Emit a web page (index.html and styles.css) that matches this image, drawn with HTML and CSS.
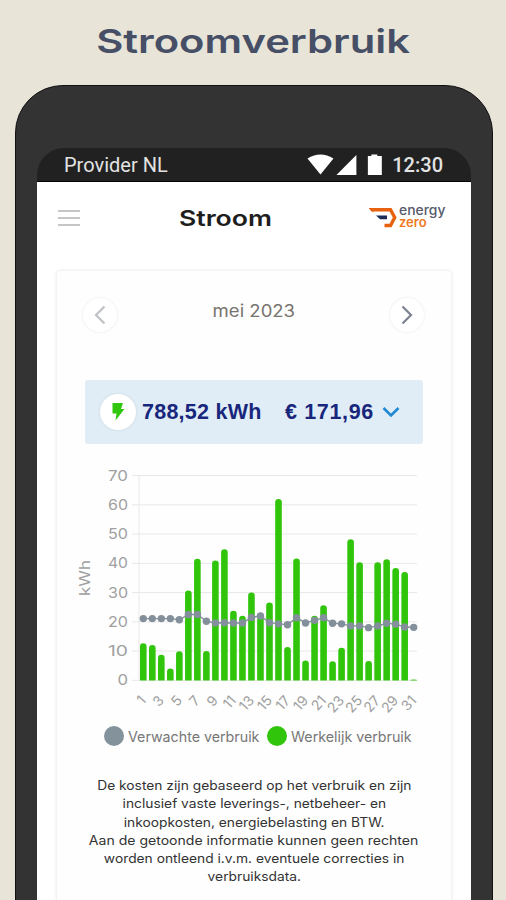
FILE: index.html
```html
<!DOCTYPE html>
<html lang="nl">
<head>
<meta charset="utf-8">
<title>Stroomverbruik</title>
<link rel="stylesheet" href="styles.css">
</head>
<body>
<h1 class="headline"><span class="wide">Stroomverbruik</span></h1>
<div class="phone">
  <div class="screen">
    <div class="status">
      <span class="provider">Provider NL</span>
      <svg class="status-icons" width="76" height="24" viewBox="0 0 76 24"><path d="M0.500 5.500Q13.500-2.500 26.500 5.500L13.500 21.500Z"/><path d="M29.500 22L49.500 2V22Z"/><path d="M61 3h3.500V1.500h6v1.500H75V22H61Z"/></svg>
      <span class="clock">12:30</span>
    </div>
    <header class="bar">
      <div class="menu"><i></i><i></i><i></i></div>
      <h2 class="title"><span class="wide">Stroom</span></h2>
      <div class="logo">
        <svg width="30" height="22" viewBox="0 0 30 22"><path d="M3 2.700H21.500L25.700 10.500L21.500 18.500H15.500" fill="none" stroke="#e8610f" stroke-width="3.400"/><path d="M-.5 1H5V4.400H2.500Z" fill="#e8610f"/><path d="M7 8.400H18V12.200H11Z" fill="#1d2b57"/></svg>
        <div class="brand"><span class="energy">energy</span><span class="zero">zero</span></div>
      </div>
    </header>
    <main class="card">
      <nav class="month">
        <span class="arrow off"><svg width="12" height="20" viewBox="0 0 12 20"><path d="M10.500 1.500L2 10L10.500 18.500"/></svg></span>
        <span class="month-name"><span class="wide">mei 2023</span></span>
        <span class="arrow"><svg width="12" height="20" viewBox="0 0 12 20"><path d="M1.500 1.500L10 10L1.500 18.500"/></svg></span>
      </nav>
      <section class="total">
        <span class="bolt"><svg width="14" height="20" viewBox="0 0 14 20"><path d="M1.500 1H12L10 7H13.500L4.500 18.500L5.500 11.500H1.500Z"/></svg></span>
        <span class="kwh">788,52 kWh</span>
        <span class="euro">€ 171,96</span>
        <svg class="chev" width="18" height="12" viewBox="0 0 18 12"><path d="M1.500 2L9 9.500L16.500 2"/></svg>
      </section>
      <svg class="chart" id="chart" width="360" height="252" viewBox="70 465 360 252"></svg>
      <div class="legend">
        <i class="dot gray"></i><span class="legend-a"><span class="wide">Verwachte verbruik</span></span>
        <i class="dot green"></i><span class="legend-b"><span class="wide">Werkelijk verbruik</span></span>
      </div>
      <p class="note"><span class="l1">De kosten zijn gebaseerd op het verbruik en zijn</span><span class="l2">inclusief vaste leverings-, netbeheer- en</span><span class="l3">inkoopkosten, energiebelasting en BTW.</span><span class="l4">Aan de getoonde informatie kunnen geen rechten</span><span class="l5">worden ontleend i.v.m. eventuele correcties in</span><span class="l6">verbruiksdata.</span></p>
    </main>
  </div>
</div>
<script src="chart.js"></script>
</body>
</html>
```
FILE: styles.css
```css
* { box-sizing: border-box; }
body { margin: 0; width: 506px; height: 900px; overflow: hidden; background: #e8e5d8; font-family: Inter, "Liberation Sans", sans-serif; }
h1, h2, p { margin: 0; }
.wide { display: inline-block; white-space: nowrap; }
.headline { height: 85px; padding-top: 21px; text-align: center; font-size: 33px; line-height: 40px; font-weight: 600; color: #464f66; }
.headline .wide { transform: scaleX(1.265); }
.phone { width: 478px; height: 850px; margin-left: 15px; padding: 62px 21px 0; background: #333; border: 1px solid #111; border-radius: 48px 48px 0 0; }
.screen { width: 434px; height: 760px; background: linear-gradient(#333 30px, #fff 30px); border-radius: 27px 27px 0 0; overflow: hidden; }
.status { display: flex; align-items: center; height: 34px; padding: 0 28px 0 27px; background: #212121; border-bottom: 1px solid #050505; color: #e3e3e3; font: 20px Roboto, sans-serif; }
.provider { width: 244px; white-space: nowrap; }
.status-icons { fill: #fff; }
.clock { margin-left: 9px; font-size: 20px; font-weight: 500; }
.bar { display: flex; align-items: center; height: 71px; padding: 0 22px 0 21px; }
.menu { display: flex; flex-direction: column; gap: 5px; width: 22px; }
.menu i { height: 2px; background: #c6c6c6; }
.title { flex: 1; padding-left: 1px; text-align: center; font-size: 22px; font-weight: 600; color: #1e1e1e; }
.title .wide { transform: scaleX(1.21); }
.logo { display: flex; width: 80px; }
.logo svg { flex: none; }
.brand { display: flex; flex-direction: column; gap: 1px; margin-top: -2px; font-size: 13px; line-height: 11px; font-weight: 500; }
.energy { color: #55596b; transform: scaleX(1.07); transform-origin: left; }
.zero { color: #f0781e; font-weight: 600; }
.card { width: 394px; height: 670px; margin: 18px 0 0 20px; padding-top: 26px; border-radius: 4px; background: #fefefe; box-shadow: 0 0 4px #e2e2e2; }
.month { display: flex; align-items: center; justify-content: space-between; padding: 0 27px 0 26px; height: 36px; }
.arrow { display: grid; place-items: center; width: 34px; height: 34px; border-radius: 50%; background: #fff; box-shadow: 0 0 3px #e8e8e8; }
.arrow path { fill: none; stroke: #7c8290; stroke-width: 2.2; }
.arrow.off path { stroke: #bfc1c7; }
.month-name { font-size: 17px; color: #77736e; padding-bottom: 8px; }
.month-name .wide { transform: scaleX(1.09); }
.total { display: flex; align-items: center; height: 64px; margin: 47px 28px 0 28px; padding-left: 15px; background: #e0edf6; border-radius: 3px; color: #18267c; font: bold 21.5px "Liberation Sans", sans-serif; white-space: nowrap; }
.bolt { display: grid; place-items: center; width: 36px; height: 36px; border-radius: 50%; background: #fff; box-shadow: 0 0 3px #c5d5e0; }
.bolt path { fill: #2fc60d; }
.kwh { width: 143px; margin-left: 6px; letter-spacing: .25px; }
.euro { width: 97px; letter-spacing: .65px; }
.chev path { fill: none; stroke: #2189d4; stroke-width: 2.6; }
.chart { display: block; margin: 21px 0 0 13px; }
.chart text { fill: #a0a0a0; }
.grid { stroke: #e8e8e8; stroke-width: 1; }
.bars { fill: #30c50b; }
.trend { fill: none; stroke: #838f9b; stroke-width: 1.4; }
.points { fill: #838f9b; }
.legend { display: flex; align-items: center; height: 38px; padding-left: 47px; font-size: 14.5px; color: #777; }
.dot { width: 20px; height: 20px; border-radius: 50%; }
.gray { background: #84929c; }
.green { background: #30c50b; }
.legend-a, .legend-b { margin-left: 4px; }
.legend-a { width: 139px; }
.legend .wide { transform: scaleX(.983); transform-origin: left; }
.note { padding-top: 22px; display: flex; flex-direction: column; align-items: center; font-size: 12.5px; line-height: 18.3px; color: #333; white-space: nowrap; }
.note span { transform: scaleX(1.104); }
.note .l4 { transform: scaleX(1.124); }
```
FILE: chart.js
```js
const NS = "http://www.w3.org/2000/svg";
const chart = document.getElementById("chart");
const used = [12.7, 12.1, 8.7, 4, 9.9, 30.7, 41.6, 10, 41, 44.8, 23.8, 22.1, 30, 21.8, 26.6, 62, 11.4, 41.6, 6.8, 22.1, 25.7, 6.5, 11.1, 48.2, 40.4, 6.6, 40.4, 41.4, 38.4, 37, 0.3];
const expected = [21.1, 21.1, 21.1, 21.1, 20.7, 22.5, 22.5, 20.2, 19.6, 19.7, 19.6, 19.6, 21.5, 22, 19.7, 19.3, 19, 21.4, 19.6, 20.5, 21.4, 19.5, 19.3, 18.6, 18.6, 18, 18.6, 19.5, 19.2, 18.2, 18.1];
const x = i => 143.3 + i * 9.013;
const y = v => 680.3 - v * 2.925;

function add(parent, tag, attrs, content) {
  const el = document.createElementNS(NS, tag);
  for (const key in attrs) el.setAttribute(key, attrs[key]);
  if (content !== undefined) el.textContent = content;
  parent.appendChild(el);
  return el;
}

const grid = add(chart, "g", { class: "grid" });
for (let v = 0; v <= 70; v += 10) {
  add(grid, "path", { d: `M132 ${y(v)}H417` });
  add(chart, "text", { x: 128, y: y(v) + 5, "text-anchor": "end", "font-size": 15, textLength: v ? 20 : 10.5, lengthAdjust: "spacingAndGlyphs" }, v);
}
add(grid, "path", { d: "M139 475V680" });
add(chart, "text", { transform: "translate(90 596) rotate(-90)", "font-size": 14, textLength: 36, lengthAdjust: "spacingAndGlyphs" }, "kWh");

const bars = add(chart, "g", { class: "bars" });
used.forEach((v, i) => {
  const top = y(v), r = Math.min(3.3, 680.5 - top), left = x(i) - 3.3;
  add(bars, "path", { d: `M${left} 680.5V${top + r}A3.3 ${r} 0 0 1 ${left + 6.6} ${top + r}V680.5Z` });
  if (i % 2 === 0) add(chart, "text", { transform: `translate(${x(i) + 3.5} 701) rotate(-48)`, "text-anchor": "end", "font-size": 14 }, i + 1);
});
add(chart, "path", { class: "trend", d: "M" + expected.map((v, i) => `${x(i)} ${y(v)}`).join("L") });
const points = add(chart, "g", { class: "points" });
expected.forEach((v, i) => add(points, "circle", { cx: x(i), cy: y(v), r: 3.7 }));
```
